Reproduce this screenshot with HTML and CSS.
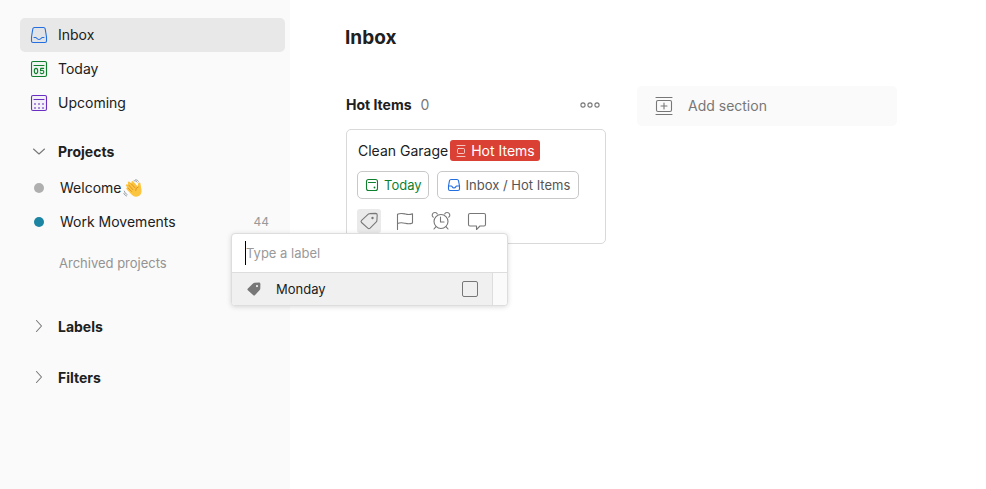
FILE: index.html
```html
<!DOCTYPE html>
<html lang="en">
<head>
<meta charset="utf-8">
<meta name="viewport" content="width=device-width, initial-scale=1">
<title>Inbox</title>
<link rel="stylesheet" href="styles.css">
</head>
<body>
<div class="app">
  <aside class="sidebar">
    <nav class="nav" aria-label="Views">
      <a class="nav-item active" href="#inbox">
        <svg class="blue" width="18" height="18" viewBox="0 0 18 18"><path class="tint" d="M4.5 1.5h9q1.4 0 1.700 1.400l1.300 8.100v4q0 1.500-1.500 1.500H3q-1.500 0-1.500-1.500v-4l1.300-8.100q.3-1.400 1.700-1.400z"/><path d="M4 11.500h1.700c1 0 1.200 2 3.300 2s2.300-2 3.300-2H14"/></svg>
        Inbox</a>
      <a class="nav-item" href="#today">
        <svg class="green" width="18" height="18" viewBox="0 0 18 18"><rect class="tint" x="1.5" y="1.5" width="15" height="15" rx="1.5"/><path d="M4 5.500h10"/><ellipse cx="6" cy="11" rx="1.700" ry="2.600"/><path d="M13.600 8.400h-2.900l-.2 2.300c1.900-.9 3.300-.1 3.300 1.200 0 1.900-2.400 2.200-3.500 1"/></svg>
        Today</a>
      <a class="nav-item" href="#upcoming">
        <svg class="purple" width="18" height="18" viewBox="0 0 18 18"><rect class="tint" x="1.5" y="1.5" width="15" height="15" rx="1.5"/><path d="M4 5.500h10"/><path class="dots" d="M4 10h2m2 0h2m2 0h2M4 14h2m2 0h2m2 0h2"/></svg>
        Upcoming</a>
    </nav>
    <section class="group projects">
      <button class="group-head" type="button" aria-expanded="true"><svg width="18" height="18" viewBox="0 0 18 18"><path d="M3.500 6L9 11l5.500-5"/></svg>Projects</button>
      <a class="project" href="#welcome"><span class="dot grey"></span><span class="name">Welcome
        <svg class="wave" width="20" height="19" viewBox="0 0 19 18" role="img" aria-label="waving hand"><path class="hand" d="M3 5.200q1-.8 2 .2L4.500 3.300q.8-1.600 2.100-.5L8.200 4.700 8 2.500q1-1.300 2 0l4 4.700.3-2.700q.2-1.500 1.500-1.200 1 .3.900 2l.8 4.500q.7 4.400-2.600 6.300-3.500 2-6.800-1.400L3.400 9.600q-.8-1.500.7-1.900L2.800 6.500q-.4-.8.2-1.300z"/><path class="lines" d="M5.500 5.800l4 4.400M7.600 4.200l3.900 4.200M4.900 8.500l3.200 3.300M14.400 7.500q-2.800 1-2.400 3.600"/><path class="motion" d="M10.500 1.500q2-.3 3 1.500M12 .6q2 .1 2.700 1.600M1.200 11.500q.4 2.400 2.700 3.200M.7 13.600q.8 2 2.700 2.600"/></svg></span></a>
      <a class="project" href="#work"><span class="dot teal"></span><span class="name">Work Movements</span><span class="count">44</span></a>
      <a class="archived" href="#archived">Archived projects</a>
    </section>
    <button class="group-head labels" type="button" aria-expanded="false"><svg width="18" height="18" viewBox="0 0 18 18"><path d="M6.500 2.500l5 5.500-5 5.500"/></svg>Labels</button>
    <button class="group-head filters" type="button" aria-expanded="false"><svg width="18" height="18" viewBox="0 0 18 18"><path d="M6.500 2.500l5 5.500-5 5.500"/></svg>Filters</button>
  </aside>

  <main class="main">
    <h1>Inbox</h1>
    <div class="board">
      <section class="column">
        <header class="column-head">
          <h2>Hot Items</h2><span class="total">0</span>
          <button class="more" type="button" aria-label="More actions"><svg width="20" height="8" viewBox="0 0 20 8"><circle cx="3" cy="4" r="2.100"/><circle cx="10" cy="4" r="2.100"/><circle cx="17" cy="4" r="2.100"/></svg></button>
        </header>
        <div class="card">
          <div class="task">Clean Garage <span class="tag"><svg width="10" height="14" viewBox="0 0 10 14"><path d="M1 1.500h8M1 12.500h8"/><rect x="1.500" y="4.500" width="7" height="5" rx="1"/></svg>Hot Items</span></div>
          <div class="chips">
            <button class="chip today" type="button"><svg class="green" width="14" height="14" viewBox="0 0 14 14"><rect x="1.500" y="1.500" width="11" height="11" rx="2"/><path d="M3.500 4.500h7"/><circle class="pip" cx="9.500" cy="9.500" r=".9"/></svg>Today</button>
            <button class="chip" type="button"><svg class="blue" width="14" height="14" viewBox="0 0 14 14"><path d="M4 1.500h6q1.200 0 1.500 1.200l1 5.300v3q0 1.500-1.500 1.500H3q-1.500 0-1.500-1.500V8l1-5.300Q2.800 1.500 4 1.500z"/><path d="M1.700 8h2.800c.6 0 .7 2 2.500 2s1.900-2 2.500-2h2.800"/></svg>Inbox / Hot Items</button>
          </div>
          <div class="actions">
            <div class="label-picker">
              <button class="action selected" type="button" aria-label="Labels"><svg width="24" height="24" viewBox="0 0 24 24"><path d="M12.800 4.600l5.700-.2q1.700 0 1.700 1.600l-.3 5.500q0 .8-.6 1.400l-6.200 6.300q-1.200 1.100-2.300 0L4.500 13.500q-1-1.100.1-2.200l6.700-6.100q.7-.6 1.500-.6z"/><circle class="pip" cx="15.500" cy="9" r="1.200"/></svg></button>
              <div class="popup">
                <div class="field"><span class="caret"></span><input type="text" placeholder="Type a label" aria-label="Type a label"></div>
                <div class="options">
                  <label class="option"><svg width="14" height="14" viewBox="0 0 14 14"><path class="solid" fill-rule="evenodd" d="M7.500.8l4.500-.2q1.400 0 1.400 1.400l-.1 4.500q0 .8-.6 1.400l-4.600 5q-1 1-2 0L.8 8.300q-.8-.9.1-1.800L6 1.400q.7-.6 1.500-.6zM10 3a1.100 1.100 0 1 0 0 2.200A1.100 1.100 0 1 0 10 3z"/></svg><span>Monday</span><input type="checkbox"></label>
                </div>
              </div>
            </div>
            <button class="action" type="button" aria-label="Priority"><svg width="24" height="24" viewBox="0 0 24 24"><path d="M4.500 20.500V5.300c3-1.600 5.300-.9 7.800-.3 2.500.7 4.700.8 7.200-.3v9.300c-2.500 1.100-4.700 1-7.200.3-2.500-.6-4.800-1.300-7.800.3"/></svg></button>
            <button class="action" type="button" aria-label="Reminders"><svg width="24" height="24" viewBox="0 0 24 24"><circle cx="12" cy="12.500" r="7"/><path d="M11.500 8v5H15M6.800 17.800L5 20M17.200 17.800L19 20M4.300 8.200C2 6.600 3.500 3.500 6 3.500q1.800 0 2.300 1.500M19.700 8.200C22 6.600 20.500 3.500 18 3.500q-1.800 0-2.300 1.500"/></svg></button>
            <button class="action" type="button" aria-label="Comments"><svg width="24" height="24" viewBox="0 0 24 24"><path d="M5 4.500h14q1.500 0 1.500 1.500v9.500q0 1.500-1.500 1.500h-4l-3.500 3.500V17H5q-1.500 0-1.500-1.500V6q0-1.500 1.500-1.500z"/></svg></button>
          </div>
        </div>
      </section>
      <button class="add-section" type="button"><svg width="18" height="20" viewBox="0 0 18 20"><path d="M1 1.500h16M1 18.500h16"/><rect x="1.500" y="4.500" width="15" height="11" rx="1.500"/><path d="M6 10h6M9 7v6"/></svg>Add section</button>
    </div>
  </main>
</div>
</body>
</html>
```
FILE: styles.css
```css
* { box-sizing: border-box; }
body {
  margin: 0;
  background: #fff;
  color: #202020;
  font-family: Inter, "Liberation Sans", sans-serif;
  font-size: 14px;
  line-height: 20px;
}
button, input { font: inherit; color: inherit; }
button { border: 0; padding: 0; background: none; text-align: left; }
a { color: inherit; text-decoration: none; }
h1, h2 { margin: 0; }
svg { display: block; flex: none; fill: none; stroke: #777; stroke-width: 1.1; stroke-linecap: round; stroke-linejoin: round; }
.blue { stroke: #246fe0; }
.green { stroke: #0f7f2e; }
.purple { stroke: #692fc2; }
.blue .tint { fill: #246fe008; }
.green .tint { fill: #0f7f2e0c; }
.purple .tint { fill: #692fc20c; }
.dots { stroke: #a98bdc; stroke-width: 2; stroke-linecap: butt; }
.pip { fill: #777; stroke: none; }
.green .pip { fill: #0f7f2e; }

.app { display: flex; min-height: 100vh; }
.sidebar {
  flex: 0 0 290px;
  padding: 18px 5px 0 20px;
  background: #fafafa;
}
.nav-item {
  display: flex;
  align-items: center;
  gap: 10px;
  height: 34px;
  padding-left: 10px;
  border-radius: 5px;
}
.active { background: #e8e8e8; }
.group-head {
  display: flex;
  align-items: center;
  gap: 10px;
  width: 100%;
  height: 34px;
  padding-left: 10px;
  font-weight: 700;
}
.projects { margin-top: 15px; }
.project {
  display: flex;
  align-items: center;
  height: 34px;
  padding: 0 16px 0 14px;
}
.group-head + .project { margin-top: 2px; }
.dot { width: 10px; height: 10px; margin-right: 16px; border-radius: 50%; }
.grey { background: #afafaf; }
.teal { background: #1b85a3; }
.name { display: flex; align-items: center; gap: 2px; flex: 1; }
.count { color: #999; font-size: 12px; }
.hand { fill: #fbc540; stroke: none; }
.lines { stroke: #d98a24; stroke-width: .8; }
.motion { stroke: #8d9499; stroke-width: .8; }
.archived { display: block; margin-top: 14px; padding-left: 39px; color: #939393; font-size: 13px; }
.labels { margin-top: 37px; }
.filters { margin-top: 17px; }

.main { flex: 1; min-width: 0; padding: 25px 55px; }
h1 { font-size: 19px; line-height: 26px; font-weight: 700; }
.board { display: flex; align-items: flex-start; gap: 31px; margin-top: 35px; padding-left: 1px; }
.column, .add-section { flex: 0 0 260px; }
.column-head { display: flex; align-items: center; height: 38px; padding-right: 6px; }
h2 { font-size: 14px; line-height: 20px; font-weight: 700; }
.total { margin-left: 9px; color: #777; }
.more { margin-left: auto; }
.card { margin-top: 5px; padding: 10px; border: 1px solid #d9d9d9; border-radius: 5px; }
.task { display: flex; align-items: center; gap: 2px; padding-left: 1px; line-height: 21px; }
.tag { display: flex; align-items: center; gap: 5px; padding: 0 5px 0 6px; border-radius: 3px; background: #db4035; color: #fff; }
.tag svg { stroke: #ffffffb0; stroke-width: 1; }
.chips { display: flex; gap: 8px; margin-top: 10px; }
.chip {
  display: flex;
  align-items: center;
  gap: 5px;
  height: 28px;
  padding: 0 8px 0 9px;
  border: 1px solid #c8c8c8;
  border-radius: 5px;
  color: #555;
  font-size: 13px;
}
.today { padding: 0 6px 0 7px; color: #0f7f2e; }
.actions { display: flex; gap: 12px; margin-top: 10px; }
.action { display: block; border-radius: 3px; }
.selected { background: #eaeaea; }
.label-picker { position: relative; }
.popup {
  position: absolute;
  top: 100%;
  left: -126px;
  width: 277px;
  border: 1px solid #ddd;
  border-radius: 4px;
  background: #fff;
  box-shadow: 0 1px 5px #00000026;
  overflow: hidden;
}
.field { display: flex; align-items: center; height: 39px; padding-left: 13px; border-bottom: 1px solid #ddd; }
.caret { width: 1px; height: 24px; background: #000; }
.field input { flex: 1; min-width: 0; padding: 0; border: 0; outline: 0; background: none; font-size: 13px; }
.field input::placeholder { color: #999; opacity: 1; }
.options { padding-right: 14px; background: #fafafa; }
.option { display: flex; align-items: center; height: 32px; padding: 0 14px 0 15px; border-right: 1px solid #ddd; background: #f0f0f0; font-size: 13px; }
.option span { flex: 1; margin-left: 15px; }
.option input { appearance: none; width: 16px; height: 16px; margin: 0; border: 1px solid #777; border-radius: 2px; }
.solid { fill: #777; stroke: none; }
.add-section {
  display: flex;
  align-items: center;
  gap: 15px;
  height: 40px;
  padding-left: 18px;
  border-radius: 5px;
  background: #fafafa;
  color: #777;
}
```
